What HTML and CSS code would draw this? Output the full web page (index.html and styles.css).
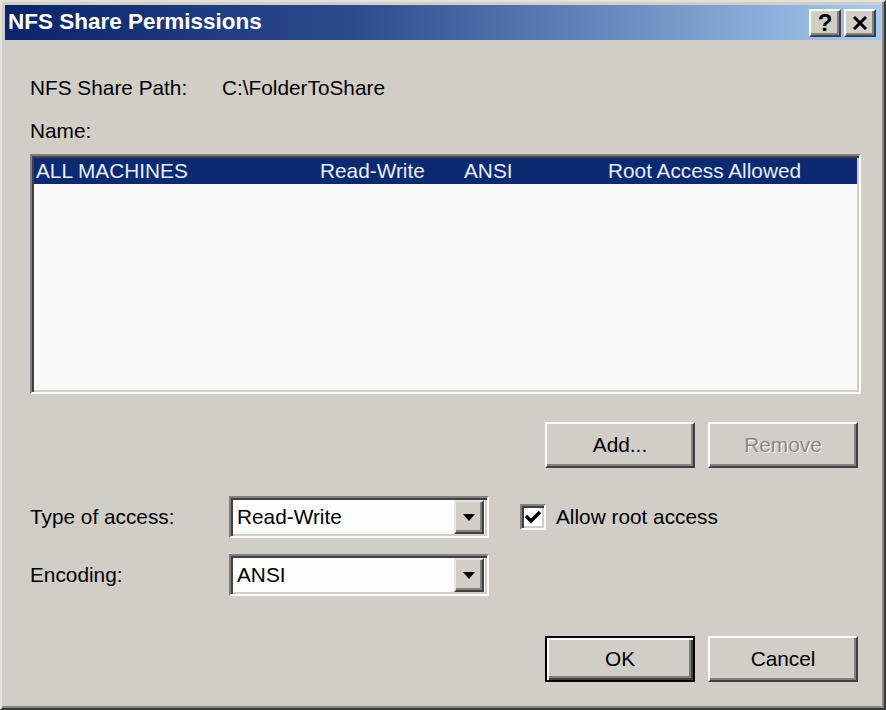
FILE: index.html
```html
<!DOCTYPE html>
<html lang="en">
<head>
    <meta charset="UTF-8">
    <meta name="viewport" content="width=device-width, initial-scale=1.0">
    <title>NFS Share Permissions</title>
    <link rel="stylesheet" href="styles.css">
</head>
<body>
    <div class="window">
        <div class="titlebar">
            <span class="title">NFS Share Permissions</span>
            <div class="caption-buttons">
                <button class="caption-btn help-btn">?</button>
                <button class="caption-btn close-btn">
                    <svg width="16" height="14" viewBox="0 0 16 14">
                        <path d="M2 1 L14 13 M14 1 L2 13" stroke="#000" stroke-width="3" fill="none"/>
                    </svg>
                </button>
            </div>
        </div>

        <div class="content">
            <div class="path-row">
                <span class="path-label">NFS Share Path:</span>
                <span>C:\FolderToShare</span>
            </div>
            <div class="name-label">Name:</div>

            <div class="listbox">
                <div class="list-item selected">
                    <span>ALL MACHINES</span>
                    <span>Read-Write</span>
                    <span>ANSI</span>
                    <span>Root Access Allowed</span>
                </div>
            </div>

            <div class="button-row list-buttons">
                <button class="btn">Add...</button>
                <button class="btn" disabled>Remove</button>
            </div>

            <div class="field-row">
                <span class="field-label">Type of access:</span>
                <div class="combo">
                    <span class="combo-text">Read-Write</span>
                    <span class="combo-arrow">
                        <svg width="12" height="7" viewBox="0 0 12 7"><path d="M0 0 H12 L6 7 Z" fill="#000"/></svg>
                    </span>
                </div>
                <label class="check">
                    <span class="check-box">
                        <svg width="18" height="16" viewBox="0 0 18 16"><path d="M2 7 L7 12 L16 3" stroke="#000" stroke-width="3.4" fill="none"/></svg>
                    </span>
                    Allow root access
                </label>
            </div>

            <div class="field-row encoding-row">
                <span class="field-label">Encoding:</span>
                <div class="combo">
                    <span class="combo-text">ANSI</span>
                    <span class="combo-arrow">
                        <svg width="12" height="7" viewBox="0 0 12 7"><path d="M0 0 H12 L6 7 Z" fill="#000"/></svg>
                    </span>
                </div>
            </div>

            <div class="button-row dialog-buttons">
                <button class="btn default">OK</button>
                <button class="btn">Cancel</button>
            </div>
        </div>
    </div>
</body>
</html>
```

FILE: styles.css
```css
body {
    margin: 0;
    padding: 0;
    background-color: #d1cdc7;
    font-family: 'Liberation Sans', Arial, sans-serif;
    font-size: 20.8px;
    color: #000000;
}
.window {
    box-sizing: border-box;
    width: 886px;
    height: 710px;
    border: 2px solid;
    border-color: #e4e1dc #3a3a3a #3a3a3a #e4e1dc;
    padding: 3px 3px 0 3px;
    background-color: #d1cdc7;
    box-shadow: inset -2px -2px #8a8783;
}
.titlebar {
    height: 35px;
    display: flex;
    align-items: center;
    justify-content: space-between;
    padding: 0 5px 0 3px;
    background: linear-gradient(to right, #0a246a 0%, #2c4c8e 40%, #a6caf0 100%);
}
.title {
    color: #ffffff;
    font-weight: bold;
    font-size: 22.5px;
    margin-top: -1px;
}
.caption-buttons {
    display: flex;
    gap: 3px;
}
.caption-btn {
    box-sizing: border-box;
    width: 32px;
    height: 28px;
    padding: 0;
    display: flex;
    align-items: center;
    justify-content: center;
    background-color: #d1cdc7;
    border: 2px solid;
    border-color: #ffffff #404040 #404040 #ffffff;
    box-shadow: inset -2px -2px #808080;
    font-family: 'Liberation Sans', Arial, sans-serif;
    font-weight: bold;
    font-size: 24px;
    color: #000000;
}
.content {
    padding: 36px 20px 0 25px;
}
.path-row {
    display: flex;
    line-height: 24px;
}
.path-label {
    width: 192px;
}
.name-label {
    line-height: 24px;
    margin-top: 19px;
}
.listbox {
    box-sizing: border-box;
    height: 240px;
    margin-top: 11px;
    border: 2px solid;
    border-color: #808080 #ffffff #ffffff #808080;
    box-shadow: inset 2px 2px #404040, inset -2px -2px #d1cdc7;
    background-color: #fbfbfb;
    padding: 2px;
}
.list-item {
    display: grid;
    grid-template-columns: 284px 144px 144px 1fr;
    height: 26px;
    line-height: 26px;
    padding-left: 2px;
}
.list-item.selected {
    background-color: #0c2a72;
    color: #e8ecf6;
}
.button-row {
    display: flex;
    justify-content: flex-end;
    gap: 13px;
    margin-right: 3px;
}
.list-buttons {
    margin-top: 28px;
}
.btn {
    box-sizing: border-box;
    width: 150px;
    height: 46px;
    background-color: #d1cdc7;
    border: 2px solid;
    border-color: #ffffff #404040 #404040 #ffffff;
    box-shadow: inset -2px -2px #808080;
    font-family: 'Liberation Sans', Arial, sans-serif;
    font-size: 20.8px;
    color: #000000;
    padding: 0;
}
.btn:disabled {
    color: #8a8783;
    text-shadow: 1px 1px #ffffff;
}
.btn.default {
    border-color: #000000;
    box-shadow: inset 2px 2px #ffffff, inset -2px -2px #404040, inset -4px -4px #808080;
}
.field-row {
    display: flex;
    align-items: center;
    margin-top: 28px;
    height: 42px;
}
.encoding-row {
    margin-top: 16px;
}
.field-label {
    width: 199px;
}
.combo {
    box-sizing: border-box;
    width: 260px;
    height: 42px;
    display: flex;
    align-items: center;
    justify-content: space-between;
    border: 2px solid;
    border-color: #808080 #ffffff #ffffff #808080;
    box-shadow: inset 2px 2px #404040, inset -2px -2px #d1cdc7;
    background-color: #fdfdfd;
    padding: 3px 3px 3px 6px;
}
.combo-arrow {
    box-sizing: border-box;
    width: 30px;
    height: 34px;
    display: flex;
    align-items: center;
    justify-content: center;
    background-color: #d1cdc7;
    border: 2px solid;
    border-color: #e8e6e2 #404040 #404040 #e8e6e2;
    box-shadow: inset -2px -2px #808080;
}
.check {
    display: flex;
    align-items: center;
    gap: 10px;
    margin-left: 31px;
}
.check-box {
    box-sizing: border-box;
    width: 26px;
    height: 26px;
    display: flex;
    align-items: center;
    justify-content: center;
    background-color: #ffffff;
    border: 2px solid;
    border-color: #808080 #ffffff #ffffff #808080;
    box-shadow: inset 2px 2px #404040, inset -2px -2px #d1cdc7;
}
.dialog-buttons {
    margin-top: 40px;
}
```
